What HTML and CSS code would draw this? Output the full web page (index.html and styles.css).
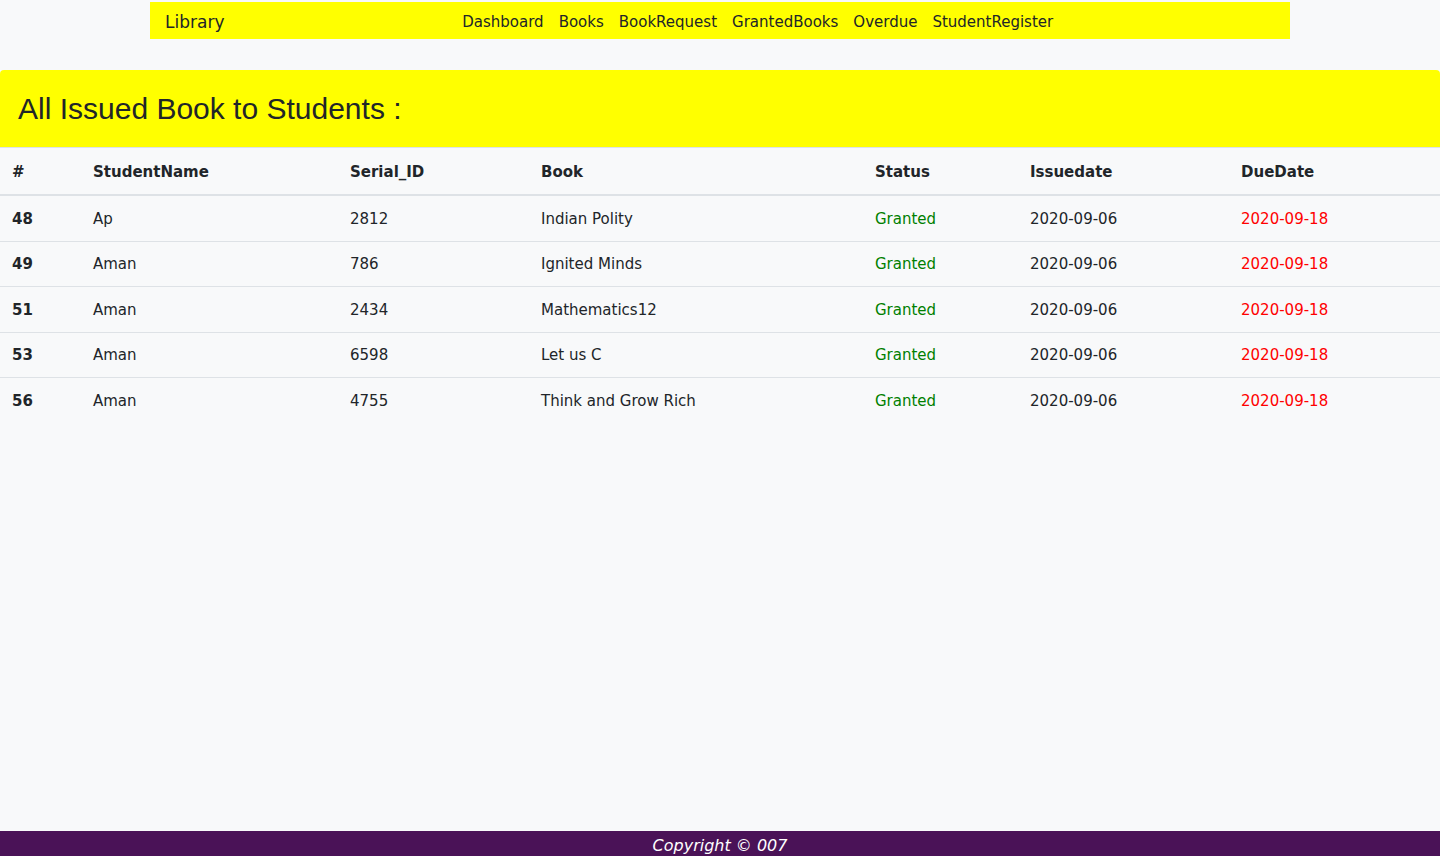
FILE: index.html
```html
<!DOCTYPE html>
<html>
<head>
<meta charset="utf-8">
<title>Library</title>
<link rel="stylesheet" href="styles.css">
</head>
<body>
<div class="topwrap">
  <nav class="navbar">
    <a class="brand" href="#">Library</a>
    <ul class="nav">
      <li><a href="#">Dashboard</a></li>
      <li><a href="#">Books</a></li>
      <li><a href="#">BookRequest</a></li>
      <li><a href="#">GrantedBooks</a></li>
      <li><a href="#">Overdue</a></li>
      <li><a href="#">StudentRegister</a></li>
    </ul>
  </nav>
</div>
<div class="card">
  <div class="card-header"><h2>All Issued Book to Students :</h2></div>
  <table class="tbl">
    <colgroup>
      <col class="c1"><col class="c2"><col class="c3"><col class="c4"><col class="c5"><col class="c6"><col class="c7">
    </colgroup>
    <thead>
      <tr><th>#</th><th>StudentName</th><th>Serial_ID</th><th>Book</th><th>Status</th><th>Issuedate</th><th>DueDate</th></tr>
    </thead>
    <tbody>
      <tr><th>48</th><td>Ap</td><td>2812</td><td>Indian Polity</td><td class="ok">Granted</td><td>2020-09-06</td><td class="due">2020-09-18</td></tr>
      <tr><th>49</th><td>Aman</td><td>786</td><td>Ignited Minds</td><td class="ok">Granted</td><td>2020-09-06</td><td class="due">2020-09-18</td></tr>
      <tr><th>51</th><td>Aman</td><td>2434</td><td>Mathematics12</td><td class="ok">Granted</td><td>2020-09-06</td><td class="due">2020-09-18</td></tr>
      <tr><th>53</th><td>Aman</td><td>6598</td><td>Let us C</td><td class="ok">Granted</td><td>2020-09-06</td><td class="due">2020-09-18</td></tr>
      <tr><th>56</th><td>Aman</td><td>4755</td><td>Think and Grow Rich</td><td class="ok">Granted</td><td>2020-09-06</td><td class="due">2020-09-18</td></tr>
    </tbody>
  </table>
</div>
<footer class="footer">Copyright © 007</footer>
</body>
</html>
```
FILE: styles.css
```css
* { box-sizing: border-box; }
html, body { margin: 0; padding: 0; }
body {
  background: #f8f9fa;
  color: #212529;
  font-family: "DejaVu Sans", Verdana, sans-serif;
  font-size: 15px;
  line-height: 1.5;
}
a { color: inherit; text-decoration: none; }

.topwrap { padding-top: 2px; }
.navbar {
  width: 1140px;
  margin: 0 auto;
  height: 37px;
  background: #ffff00;
  display: flex;
  align-items: center;
  padding: 4px 15px 0;
}
.brand {
  font-size: 17px;
  margin-right: 16px;
  color: #212529;
}
.nav {
  list-style: none;
  margin: 0 auto;
  padding: 0;
  display: flex;
}
.nav a {
  display: block;
  padding: 0 7.5px;
  color: #212529;
}

.card {
  margin-top: 31px;
}
.card-header {
  background: #ffff00;
  border-radius: 4px 4px 0 0;
  border-bottom: 1px solid #dee2e6;
  height: 78px;
  display: flex;
  align-items: center;
  padding: 0 18px;
}
.card-header h2 {
  margin: 0;
  font-family: "Liberation Sans", Arial, sans-serif;
  font-weight: 400;
  font-size: 30px;
  line-height: 1.2;
}

.tbl {
  width: 100%;
  border-collapse: collapse;
  table-layout: fixed;
}
.c1 { width: 81px; }
.c2 { width: 257px; }
.c3 { width: 191px; }
.c4 { width: 334px; }
.c5 { width: 155px; }
.c6 { width: 211px; }
.c7 { width: 211px; }
.tbl th, .tbl td {
  text-align: left;
  padding: 12.75px 12px 10.25px;
  vertical-align: top;
  line-height: 21.5px;
}
.tbl thead th {
  border-bottom: 2px solid #dee2e6;
  font-weight: 700;
  line-height: 22px;
  padding-top: 13px;
  padding-bottom: 11px;
}
.tbl tbody tr + tr th, .tbl tbody tr + tr td {
  border-top: 1px solid #dee2e6;
}
.tbl tbody th { font-weight: 700; }
.ok { color: #008000; }
.due { color: #ff0000; }

.footer {
  position: fixed;
  left: 0;
  right: 0;
  bottom: 0;
  height: 25px;
  background: #4a1257;
  color: #ffffff;
  text-align: center;
  font-style: italic;
  font-size: 16px;
  line-height: 29px;
}
```
